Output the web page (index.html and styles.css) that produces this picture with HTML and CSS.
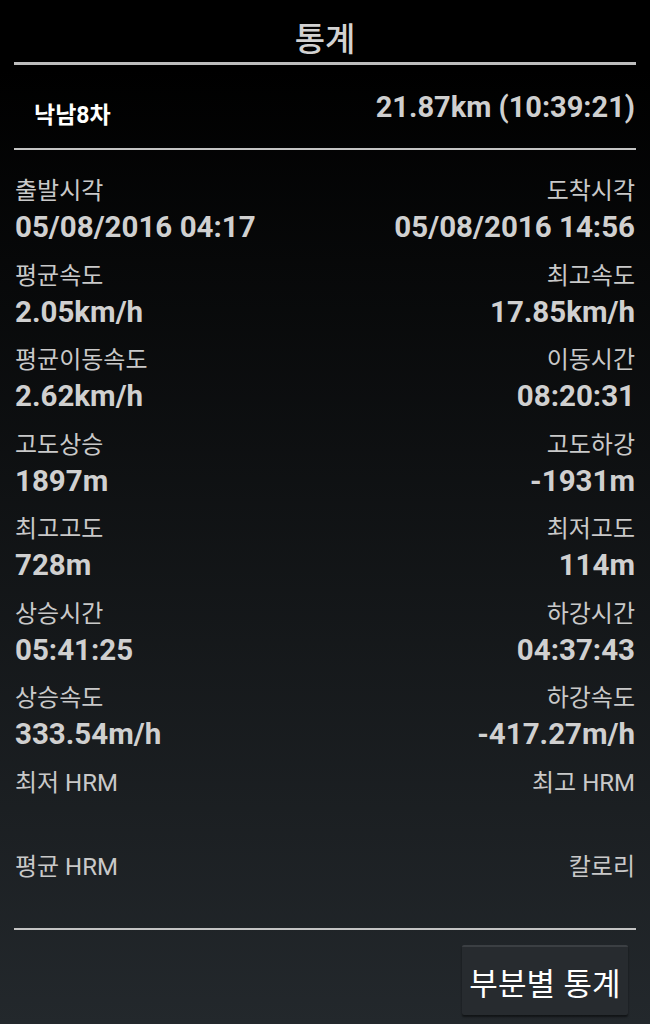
FILE: index.html
```html
<!DOCTYPE html>
<html lang="ko">
<head>
<meta charset="utf-8">
<title>통계</title>
<link rel="stylesheet" href="styles.css">
</head>
<body>
<div class="screen">
  <header class="header">
    <h1 class="title">통계</h1>
  </header>
  <div class="rule rule-thick"></div>
  <div class="summary">
    <span class="track-name">낙남8차</span>
    <span class="track-total">21.87km (10:39:21)</span>
  </div>
  <div class="rule"></div>
  <div class="stats">
    <div class="stat"><div class="label">출발시각</div><div class="value">05/08/2016 04:17</div></div>
    <div class="stat right"><div class="label">도착시각</div><div class="value">05/08/2016 14:56</div></div>
    <div class="stat"><div class="label">평균속도</div><div class="value">2.05km/h</div></div>
    <div class="stat right"><div class="label">최고속도</div><div class="value">17.85km/h</div></div>
    <div class="stat"><div class="label">평균이동속도</div><div class="value">2.62km/h</div></div>
    <div class="stat right"><div class="label">이동시간</div><div class="value">08:20:31</div></div>
    <div class="stat"><div class="label">고도상승</div><div class="value">1897m</div></div>
    <div class="stat right"><div class="label">고도하강</div><div class="value">-1931m</div></div>
    <div class="stat"><div class="label">최고고도</div><div class="value">728m</div></div>
    <div class="stat right"><div class="label">최저고도</div><div class="value">114m</div></div>
    <div class="stat"><div class="label">상승시간</div><div class="value">05:41:25</div></div>
    <div class="stat right"><div class="label">하강시간</div><div class="value">04:37:43</div></div>
    <div class="stat"><div class="label">상승속도</div><div class="value">333.54m/h</div></div>
    <div class="stat right"><div class="label">하강속도</div><div class="value">-417.27m/h</div></div>
    <div class="stat"><div class="label">최저 HRM</div><div class="value"></div></div>
    <div class="stat right"><div class="label">최고 HRM</div><div class="value"></div></div>
    <div class="stat"><div class="label">평균 HRM</div><div class="value"></div></div>
    <div class="stat right"><div class="label">칼로리</div><div class="value"></div></div>
  </div>
  <div class="rule rule-bottom"></div>
  <div class="actions">
    <button class="btn">부분별 통계</button>
  </div>
</div>
</body>
</html>
```
FILE: styles.css
```css
html, body {
  margin: 0;
  padding: 0;
}
body {
  width: 650px;
  height: 1024px;
  overflow: hidden;
  background: linear-gradient(to bottom, #000000 0px, #000000 70px, #23282c 1024px);
  font-family: "Roboto", "Noto Sans CJK KR", sans-serif;
  color: #cfcfcf;
}
.screen {
  display: flex;
  flex-direction: column;
  padding: 0 14px;
  height: 1024px;
  box-sizing: border-box;
}
.header {
  padding-top: 12px;
  height: 50px;
  display: flex;
  justify-content: center;
}
.title {
  margin: 0;
  font-size: 33px;
  font-weight: 500;
  line-height: 50px;
  color: #d2d2d2;
  font-family: "Noto Sans CJK KR", sans-serif;
}
.rule {
  height: 2px;
  background: #c4c4c4;
}
.rule-thick {
  height: 3px;
  background: #bdbdbd;
}
.summary {
  height: 83px;
  display: flex;
  justify-content: space-between;
  align-items: center;
  padding: 0 1px 0 20px;
}
.track-name {
  font-family: "Roboto", "Noto Sans CJK KR", sans-serif;
  font-size: 23px;
  font-weight: 700;
  color: #ffffff;
  padding-top: 12px;
}
.track-total {
  font-size: 29px;
  font-weight: 700;
  color: #cfcfcf;
}
.stats {
  display: grid;
  grid-template-columns: 1fr 1fr;
  row-gap: 8.5px;
  padding: 22px 1px 0 1px;
}
.stat {
  display: flex;
  flex-direction: column;
  align-items: flex-start;
}
.stat.right {
  align-items: flex-end;
}
.label {
  height: 38px;
  line-height: 38px;
  font-size: 24px;
  font-weight: 400;
  color: #c9c9c9;
}
.value {
  height: 38px;
  line-height: 34px;
  font-size: 29.5px;
  font-weight: 700;
  color: #d0d0d0;
}
.rule-bottom {
  margin-top: 4px;
}
.actions {
  display: flex;
  justify-content: flex-end;
  padding-top: 15px;
  padding-right: 8px;
}
.btn {
  width: 166px;
  height: 70px;
  background: #272b2f;
  border: none;
  border-top: 2px solid #3b3f43;
  box-shadow: 0 2px 2px rgba(0, 0, 0, 0.5);
  border-radius: 2px;
  color: #ffffff;
  font-family: "Noto Sans CJK KR", sans-serif;
  font-size: 31px;
  font-weight: 400;
  padding: 0;
}
```
